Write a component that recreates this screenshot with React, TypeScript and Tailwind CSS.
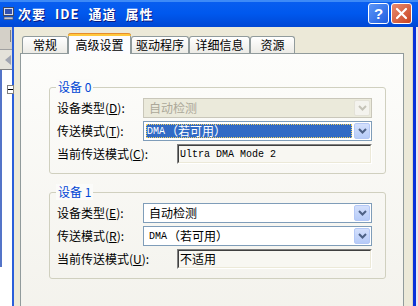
import React from "react";

const CJK = "font-['Noto_Sans_CJK_SC',sans-serif]";
const MONO = "font-['Liberation_Mono','Noto_Sans_CJK_SC',monospace]";

function Chevron({ disabled }: { disabled?: boolean }) {
  return (
    <svg width="9" height="6" viewBox="0 0 9 6">
      <path d="M1 1 L4.5 4.5 L8 1" fill="none" stroke={disabled ? "#C5C3B8" : "#4D6185"} strokeWidth="2" />
    </svg>
  );
}

function DropBtn({ disabled }: { disabled?: boolean }) {
  return (
    <div
      className={
        "w-[16px] h-[16px] mr-[1px] flex items-center justify-center rounded-[2px] border " +
        (disabled
          ? "bg-[#F4F3EE] border-[#E4E2D8]"
          : "bg-linear-to-b from-[#D4E0FC] to-[#B6CBF8] border-[#B4C8F6]")
      }
    >
      <Chevron disabled={disabled} />
    </div>
  );
}

function Label({ t, k, w }: { t: string; k: string; w: string }) {
  return (
    <span className={"shrink-0 text-[12px] leading-none text-black whitespace-nowrap " + w}>
      {t}(<span className="underline">{k}</span>):
    </span>
  );
}

function Combo({ children, disabled, selected }: { children: React.ReactNode; disabled?: boolean; selected?: boolean }) {
  return (
    <div
      className={
        "w-[229px] h-[20px] flex items-center border " +
        (disabled ? "border-[#C9C7BA] bg-[#EBEADB]" : "border-[#7F9DB9] bg-white")
      }
    >
      <div className="flex-1 h-full p-[2px] flex">
        {selected ? (
          <div className="flex-1 bg-[#316AC5] outline-1 outline-dotted outline-[#F0D060] -outline-offset-1 flex items-center pl-[1px] text-white">
            {children}
          </div>
        ) : (
          <div className={"flex-1 flex items-center pl-[3px] " + (disabled ? "text-[#ACA899]" : "text-black")}>{children}</div>
        )}
      </div>
      <DropBtn disabled={disabled} />
    </div>
  );
}

function TextBox({ children }: { children: React.ReactNode }) {
  return (
    <div className="w-[195px] h-[20px] border-t border-l border-t-[#808080] border-l-[#808080] border-b border-r border-b-white border-r-white">
      <div className="w-full h-full border-t border-l border-t-[#404040] border-l-[#404040] border-b border-r border-b-[#ECE9D8] border-r-[#ECE9D8] bg-[#F8F7F2] flex items-center pl-[1px]">
        {children}
      </div>
    </div>
  );
}

function DmaText() {
  return (
    <span className="flex items-center whitespace-nowrap">
      <span className={MONO + " text-[10px]"}>DMA</span>
      <span className="text-[12px] leading-none ml-[1px]">（若可用）</span>
    </span>
  );
}

function Group({
  title,
  children,
  className,
}: {
  title: string;
  children: React.ReactNode;
  className: string;
}) {
  return (
    <div className={"relative w-[337px] border border-[#D0D0BF] rounded-[3px] pl-[7px] pr-[12px] pt-[10px] pb-[9px] flex flex-col gap-[3px] " + className}>
      <div className="absolute -top-[9px] left-[6px] px-[2px] bg-[#FBFBF9] text-[12px] leading-[16px] text-[#0046D5] whitespace-nowrap">
        {title}
      </div>
      {children}
    </div>
  );
}

function Row({ children }: { children: React.ReactNode }) {
  return <div className="h-[20px] flex items-center">{children}</div>;
}

function Tab({ label, w, selected }: { label: string; w: string; selected?: boolean }) {
  if (selected) {
    return (
      <div
        className={
          "relative z-10 -mb-[1px] h-[21px] rounded-t-[3px] border-x border-[#919B9C] bg-[#FCFCFE] flex flex-col " + w
        }
      >
        <div className="h-[3px] -mx-[1px] rounded-t-[3px] bg-[#FFC83C] border-t border-[#E68B2C]" />
        <div className="flex-1 flex items-center justify-center text-[12px] leading-none text-black pb-[1px]">{label}</div>
      </div>
    );
  }
  return (
    <div
      className={
        "h-[17px] rounded-t-[3px] border border-b-0 border-[#919B9C] bg-linear-to-b from-white to-[#ECEBE6] flex items-center justify-center text-[12px] leading-none text-black " +
        w
      }
    >
      {label}
    </div>
  );
}

export default function App() {
  return (
    <div className={"w-[418px] h-[306px] overflow-hidden flex flex-col bg-white " + CJK}>
      {/* Title bar */}
      <div className="h-[27px] shrink-0 flex items-center bg-linear-to-b from-[#0A5FF0] via-[#0058EE] to-[#0047D4] relative">
        <div className="absolute top-0 left-0 right-0 h-[2px] bg-[#3D8AF7]" />
        <svg className="ml-[3px]" width="11" height="13" viewBox="0 0 11 13">
          <rect x="0.5" y="0.5" width="10" height="8" fill="#D8DCE8" stroke="#404860" />
          <rect x="2" y="2" width="7" height="5" fill="#3050B0" />
          <rect x="1" y="10" width="9" height="2.5" fill="#C0C4D0" stroke="#404860" strokeWidth="0.6" />
        </svg>
        <div className="ml-[4px] flex items-center gap-[9px] text-[13px] font-bold text-white leading-none whitespace-nowrap [text-shadow:1px_1px_0_#0A1A80]">
          <span className="tracking-[1px]">次要</span>
          <span className="tracking-[1px]">IDE</span>
          <span className="tracking-[1px]">通道</span>
          <span className="tracking-[1px]">属性</span>
        </div>
        <div className="flex-1" />
        <div className="w-[21px] h-[21px] rounded-[3px] border border-white bg-linear-to-br from-[#5C95F7] to-[#1E5DE0] flex items-center justify-center text-white text-[15px] font-bold leading-none font-['Liberation_Sans',sans-serif]">
          ?
        </div>
        <div className="ml-[2px] mr-[6px] w-[21px] h-[21px] rounded-[3px] border border-white bg-linear-to-br from-[#E88B6E] to-[#C8421E] flex items-center justify-center">
          <svg width="13" height="13" viewBox="0 0 13 13">
            <path d="M2 2 L11 11 M11 2 L2 11" stroke="white" strokeWidth="2.2" strokeLinecap="round" />
          </svg>
        </div>
      </div>

      <div className="flex-1 flex">
        {/* Background window strip */}
        <div className="w-[12px] shrink-0 flex flex-col">
          <div className="h-[23px] bg-[#D4D0C8] border-b border-[#A0A0A0] flex justify-end pr-[1px] pt-[3px]">
            <div className="w-[1px] h-[12px] bg-[#808080]" />
          </div>
          <div className="h-[20px] bg-[#E4E2DA] flex items-center justify-end pr-[1px] border-b border-[#808080]">
            <svg width="6" height="10" viewBox="0 0 6 10">
              <path d="M6 0 L0 5 L6 10 Z" fill="#A0A4B0" />
            </svg>
          </div>
          <div className="h-[197px] bg-white border-l-2 border-[#5474C8] relative">
            <div className="absolute top-[15px] left-[5px] w-[7px] h-[9px] border border-[#808080] bg-white flex items-center">
              <div className="w-[5px] h-[1px] bg-black" />
            </div>
          </div>
          <div className="flex-1 bg-white" />
        </div>
        <div className="w-[2px] shrink-0 bg-[#2B5FDA]" />

        {/* Dialog body */}
        <div className="flex-1 bg-[#ECE9D8] pt-[5px] pl-[6px] flex flex-col">
          <div className="flex items-end pl-[2px] h-[21px]">
            <Tab label="常规" w="w-[46px]" />
            <Tab label="高级设置" w="w-[63px]" selected />
            <Tab label="驱动程序" w="w-[58px]" />
            <Tab label="详细信息" w="w-[61px]" />
            <Tab label="资源" w="w-[45px]" />
          </div>
          <div className="w-[384px] h-[270px] border border-[#919B9C] bg-linear-to-b from-[#FDFDFB] to-[#F3F2EC] pl-[28px] pt-[33px]">
            <Group title="设备 0" className="">
              <Row>
                <Label t="设备类型" k="D" w="w-[86px]" />
                <Combo disabled>
                  <span className="text-[12px] leading-none">自动检测</span>
                </Combo>
              </Row>
              <Row>
                <Label t="传送模式" k="T" w="w-[86px]" />
                <Combo selected>
                  <DmaText />
                </Combo>
              </Row>
              <Row>
                <Label t="当前传送模式" k="C" w="w-[120px]" />
                <TextBox>
                  <span className={MONO + " text-[10px] text-black whitespace-pre"}>Ultra DMA Mode 2</span>
                </TextBox>
              </Row>
            </Group>
            <Group title="设备 1" className="mt-[18px]">
              <Row>
                <Label t="设备类型" k="E" w="w-[86px]" />
                <Combo>
                  <span className="text-[12px] leading-none">自动检测</span>
                </Combo>
              </Row>
              <Row>
                <Label t="传送模式" k="R" w="w-[86px]" />
                <Combo>
                  <DmaText />
                </Combo>
              </Row>
              <Row>
                <Label t="当前传送模式" k="U" w="w-[120px]" />
                <TextBox>
                  <span className="text-[12px] leading-none text-black">不适用</span>
                </TextBox>
              </Row>
            </Group>
          </div>
        </div>

        {/* Right border */}
        <div className="w-[6px] shrink-0 flex">
          <div className="w-[1px] bg-[#D8D4C4]" />
          <div className="w-[3px] bg-[#0831D9]" />
          <div className="w-[2px] bg-[#E8E8F0]" />
        </div>
      </div>
    </div>
  );
}
